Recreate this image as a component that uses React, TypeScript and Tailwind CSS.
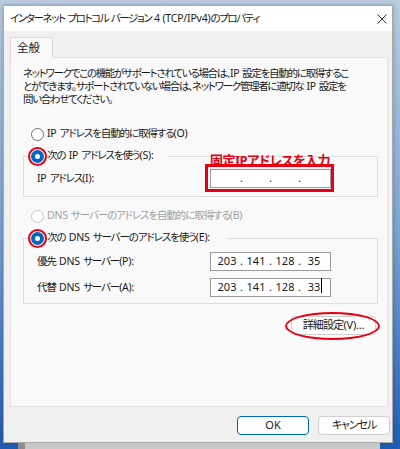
import React from 'react';

const font = "font-['Noto_Sans','Noto_Sans_CJK_JP',sans-serif] [font-feature-settings:'palt'] tracking-[-1.1px]";

// 半角の部分だけ字間を戻す
const T = ({ children }: { children: string }) => (
    <>
        {children.split(/([\x21-\x7e]+)/).map((part, i) =>
            /^[\x21-\x7e]+$/.test(part) ? (
                <span key={i} className="tracking-[-0.2px]">
                    {part}
                </span>
            ) : (
                <React.Fragment key={i}>{part}</React.Fragment>
            )
        )}
    </>
);

const Radio = ({ checked = false, disabled = false, circled = false }: { checked?: boolean; disabled?: boolean; circled?: boolean }) => (
    <span className="relative inline-flex w-[13px] h-[13px] shrink-0">
        {checked ? (
            <span className="w-[13px] h-[13px] rounded-full bg-[#0067c0] flex items-center justify-center">
                <span className="w-[5px] h-[5px] rounded-full bg-white" />
            </span>
        ) : (
            <span
                className={
                    disabled
                        ? 'w-[13px] h-[13px] rounded-full border border-[#c6c6c6] bg-white'
                        : 'w-[13px] h-[13px] rounded-full border border-[#6e6e6e] bg-white'
                }
            />
        )}
        {circled && <span className="absolute -inset-[3px] rounded-full border-2 border-[#e60012]" />}
    </span>
);

const IpField = ({ parts, caret = false }: { parts: string[]; caret?: boolean }) => (
    <div className="w-[121px] h-[19px] bg-white border border-[#9a9a9a] flex items-center pl-[5px] text-[11px] tracking-normal text-[#1a1a1a]">
        {parts.map((p, i) => (
            <React.Fragment key={i}>
                {i > 0 && <span className="w-[7px] text-center">.</span>}
                <span className="w-[22px] text-center relative">
                    {p}
                    {caret && i === 3 && <span className="absolute top-[-1px] right-[3px] w-px h-[15px] bg-black" />}
                </span>
            </React.Fragment>
        ))}
    </div>
);

export default function App() {
    return (
        <div className={`w-[400px] h-[449px] overflow-hidden bg-gradient-to-b from-[#bccfe2] via-[#7fa7d6] to-[#1f5db6] ${font}`}>
            <div className="ml-[3px] mt-[5px] w-[390px] h-[438px] border border-[#a8a8a8] bg-[#f0f0f0] shadow-[0_0_6px_rgba(0,0,0,0.25)] flex flex-col">
                {/* タイトルバー */}
                <div className="h-[25px] bg-white flex items-center justify-between pl-[6px] pr-[4px]">
                    <span className="text-[10.5px] tracking-[-1.4px] text-[#1a1a1a] whitespace-pre">
                        <T>{'インターネット  プロトコル  バージョン  4  (TCP/IPv4)のプロパティ'}</T>
                    </span>
                    <svg width="10" height="10" viewBox="0 0 10 10" className="mr-[1px]">
                        <path d="M0.5 0.5 L9.5 9.5 M9.5 0.5 L0.5 9.5" stroke="#333" strokeWidth="1" />
                    </svg>
                </div>

                <div className="flex-1 flex flex-col pl-[6px] pr-[2px]">
                    {/* タブ */}
                    <div className="mt-[6px] flex">
                        <div className="relative z-10 -mb-px w-[43px] h-[21px] bg-[#f9f9f9] border border-b-0 border-[#dadada] flex items-center pl-[6px] text-[11.5px] tracking-normal text-[#1a1a1a]">
                            全般
                        </div>
                    </div>

                    {/* タブパネル */}
                    <div className="mr-[2px] h-[350px] bg-[#f9f9f9] border border-[#e1e1e1] pl-[12px] pr-[9px] pt-[9px] flex flex-col text-[10.5px] text-[#1a1a1a]">
                        <p className="leading-[13px] whitespace-pre tracking-[-1.3px]">
                            <T>{'ネットワークでこの機能がサポートされている場合は、IP  設定を自動的に取得するこ\nとができます。サポートされていない場合は、ネットワーク管理者に適切な  IP  設定を\n問い合わせてください。'}</T>
                        </p>

                        <div className="mt-[20px] h-[16px] flex items-center gap-[3px] pl-[8px] whitespace-pre">
                            <Radio />
                            <span><T>{'IP  アドレスを自動的に取得する(O)'}</T></span>
                        </div>

                        <fieldset className="relative mt-[6px] w-[355px] border border-[#dcdcdc] pl-[13px] pt-[5px] pb-[8px]">
                            <legend className="-ml-[6px] w-[136px] h-[16px] flex items-center gap-[3px] whitespace-pre">
                                <Radio checked circled />
                                <span><T>{'次の  IP  アドレスを使う(S):'}</T></span>
                            </legend>
                            <span className="absolute left-[186px] -top-[12px] text-[13px] font-bold tracking-[-0.5px] text-[#e60012] leading-[16px] whitespace-nowrap">
                                固定IPアドレスを入力
                            </span>
                            <div className="h-[19px] flex items-center whitespace-pre">
                                <span className="w-[173px]"><T>{'IP  アドレス(I):'}</T></span>
                                <div className="relative">
                                    <IpField parts={['', '', '', '']} />
                                    <span className="absolute -left-[5px] -top-[5px] -right-[3px] -bottom-[4px] border-[3px] border-[#e60012]" />
                                </div>
                            </div>
                        </fieldset>

                        <div className="mt-[11px] h-[16px] flex items-center gap-[3px] pl-[8px] text-[#a0a0a0] whitespace-pre">
                            <Radio disabled />
                            <span><T>{'DNS  サーバーのアドレスを自動的に取得する(B)'}</T></span>
                        </div>

                        <fieldset className="mt-[6px] w-[355px] border border-[#dcdcdc] pl-[13px] pt-[6px] pb-[6px] flex flex-col gap-[7px] whitespace-pre">
                            <legend className="-ml-[6px] w-[196px] h-[16px] flex items-center gap-[3px]">
                                <Radio checked circled />
                                <span><T>{'次の  DNS  サーバーのアドレスを使う(E):'}</T></span>
                            </legend>
                            <div className="h-[19px] flex items-center">
                                <span className="w-[173px]"><T>{'優先  DNS  サーバー(P):'}</T></span>
                                <IpField parts={['203', '141', '128', '35']} />
                            </div>
                            <div className="h-[19px] flex items-center">
                                <span className="w-[173px]"><T>{'代替  DNS  サーバー(A):'}</T></span>
                                <IpField parts={['203', '141', '128', '33']} caret />
                            </div>
                        </fieldset>

                        <div className="mt-[12px] w-[355px] flex justify-end pr-[2px]">
                            <div className="relative">
                                <button className="w-[85px] h-[19px] rounded-[3px] bg-[#fdfdfd] border border-[#d0d0d0] text-[11px] tracking-[-0.8px] text-[#1a1a1a] flex items-center justify-center">
                                    <T>詳細設定(V)...</T>
                                </button>
                                <span className="absolute -left-[6px] -right-[4px] -top-[4px] -bottom-[5px] rounded-[50%] border-2 border-[#e60012]" />
                            </div>
                        </div>
                    </div>

                    {/* ボタン */}
                    <div className="mt-[9px] flex justify-end gap-[9px]">
                        <button className="w-[72px] h-[19px] rounded-[4px] bg-[#fdfdfd] border border-[#0067c0] text-[11px] tracking-normal text-[#1a1a1a] flex items-center justify-center">
                            OK
                        </button>
                        <button className="w-[72px] h-[19px] rounded-[4px] bg-[#fdfdfd] border border-[#d0d0d0] text-[11px] text-[#1a1a1a] flex items-center justify-center">
                            キャンセル
                        </button>
                    </div>
                </div>
            </div>
            <div className="flex">
                <div className="w-[18px]" />
                <div className="w-[362px] h-[8px] bg-[#c9c9c9] border-l-[7px] border-[#8d8d8d]" />
            </div>
        </div>
    );
}
